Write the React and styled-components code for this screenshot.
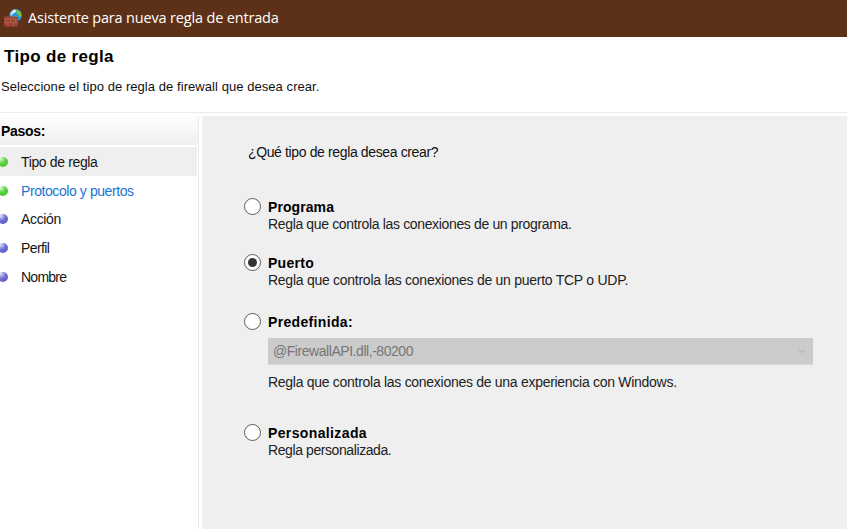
import React from 'react';
import styled, { createGlobalStyle } from 'styled-components';

const GlobalStyle = createGlobalStyle`
  * { box-sizing: border-box; }
  body { margin: 0; background: #fff; overflow: hidden; }
`;

const Window = styled.div`
  display: flex;
  flex-direction: column;
  width: 847px;
  height: 529px;
  overflow: hidden;
  color: #111;
  background: #fff;
  font: 14px/18px "Liberation Sans", Arial, sans-serif;
  white-space: nowrap;
`;

const TitleBar = styled.header`
  display: flex;
  align-items: center;
  gap: 6px;
  flex: none;
  height: 37px;
  padding: 0 0 2px 3px;
  background: #5d3118;
`;

const TitleText = styled.span`
  color: #fff;
  font: 14.5px/20px "Open Sans", "Noto Sans", sans-serif;
  letter-spacing: -0.17px;
`;

const PageHeader = styled.div`
  flex: none;
  height: 76px;
  padding-top: 10px;
  border-bottom: 1px solid #ececec;
`;

const PageTitle = styled.h1`
  margin: 0;
  padding-left: 4px;
  color: #000;
  font-size: 17px;
  line-height: 20px;
  letter-spacing: 0.33px;
`;

const PageHint = styled.p`
  margin: 11px 0 0;
  padding-left: 1px;
  font-size: 13px;
  letter-spacing: 0.06px;
`;

const Body = styled.div`
  display: flex;
  flex: 1;
  gap: 3px;
  padding-top: 3px;
`;

const Sidebar = styled.nav`
  width: 199px;
  border-right: 1px solid #ebebeb;
`;

const SidebarTitle = styled.h2`
  height: 29px;
  margin: 0 0 2px;
  padding: 6px 0 0 1px;
  color: #000;
  font-size: 14px;
  line-height: 18px;
  letter-spacing: -0.32px;
  background: linear-gradient(#fdfdfd, #f0f0f0);
`;

const Step = styled.div`
  display: flex;
  align-items: center;
  height: 28.8px;
  margin-right: 1px;
  color: ${(p) => (p.$link ? '#1a74d4' : '#151515')};
  background: ${(p) => (p.$active ? '#efefef' : 'transparent')};
  letter-spacing: ${(p) => p.$spacing}px;
  padding-top: ${(p) => (p.$active || p.$link ? 1 : 0)}px;
`;

const Bullet = styled.i`
  width: 10px;
  height: 10px;
  margin: 1px 13px 0 -2px;
  border-radius: 50%;
  background: ${(p) =>
    p.$done
      ? 'radial-gradient(circle at 30% 20%, #e4f9df 0, #8be078 25%, #52cd3b 50%, #4cc035 100%)'
      : 'radial-gradient(circle at 30% 20%, #e2e2fa 0, #9c9ce2 25%, #6868d0 50%, #6060c6 100%)'};
`;

const Panel = styled.main`
  flex: 1;
  padding: 27px 34px 0 44px;
  background: #efefef;
`;

const Question = styled.p`
  margin: 0 0 37px;
  padding-left: 2px;
  letter-spacing: -0.37px;
`;

const Option = styled.section`
  display: grid;
  grid-template-columns: 22px 1fr;
  margin-bottom: ${(p) => p.$gap}px;
`;

const Radio = styled.span`
  display: grid;
  place-items: center;
  width: 17px;
  height: 17px;
  margin-left: -2px;
  border: 1.5px solid #5c5c5c;
  border-radius: 50%;
  background: #fff;

  &::after {
    content: '';
    width: 9px;
    height: 9px;
    border-radius: 50%;
    background: ${(p) => (p.$checked ? '#333' : 'transparent')};
  }
`;

const OptionName = styled.strong`
  color: #000;
  letter-spacing: ${(p) => p.$spacing}px;
`;

const Description = styled.span`
  grid-column: 2;
  margin-top: -1px;
  color: #222;
  letter-spacing: ${(p) => p.$spacing}px;
`;

const Combo = styled.div`
  grid-column: 2;
  display: flex;
  align-items: center;
  justify-content: space-between;
  height: 27px;
  margin: 7px 0 9px;
  padding: 0 7px 0 5px;
  border-bottom: 1px solid #d7d7d7;
  color: #777;
  background: #cbcbcb;
  letter-spacing: -0.45px;
`;

function FirewallIcon() {
  return (
    <svg width="19" height="20" viewBox="0 0 19 20">
      <circle cx="12.7" cy="7.3" r="6.2" fill="#2f8fd8" />
      <path d="M7 5.5q2-4 5-4.3l1 2-2 2.2-2 1.3-1 2z" fill="#a9def2" />
      <path d="M13.5 1.5q4 1 5 5l-1 3-2-1.5-1.5-2-1-2z" fill="#6bc24c" />
      <path d="M10.5 8l3 .5 1.5 2.5-1 2.2-3-1z" fill="#57ad50" />
      <path d="M10 3l2-1 1 1.5-2 1.5z" fill="#eefafd" />
      <path d="M1 8.5h8l6 .8v9.2H1z" fill="#99402f" />
      <path d="M1 11.2h14M1 14.7h14M5 8.5v2.7M10 8.8v2.4M3 11.2v3.5M7.5 11.2v3.5M12.5 11.2v3.5M5 14.7v3.8M10 14.7v3.8" stroke="#b66f5e" strokeWidth=".7" />
    </svg>
  );
}

const steps = [
  { label: 'Tipo de regla', spacing: -0.36, done: true, active: true },
  { label: 'Protocolo y puertos', spacing: -0.42, done: true, link: true },
  { label: 'Acción', spacing: -0.34 },
  { label: 'Perfil', spacing: -0.6 },
  { label: 'Nombre', spacing: -0.75 },
];

const options = [
  { name: 'Programa', nameSpacing: 0.08, text: 'Regla que controla las conexiones de un programa.', spacing: -0.35, gap: 21 },
  { name: 'Puerto', nameSpacing: 0.27, text: 'Regla que controla las conexiones de un puerto TCP o UDP.', spacing: -0.265, gap: 24, checked: true },
  { name: 'Predefinida:', nameSpacing: 0.34, combo: '@FirewallAPI.dll,-80200', text: 'Regla que controla las conexiones de una experiencia con Windows.', spacing: -0.285, gap: 33 },
  { name: 'Personalizada', nameSpacing: 0.37, text: 'Regla personalizada.', spacing: -0.41, gap: 0 },
];

export default function App() {
  return (
    <Window>
      <GlobalStyle />
      <TitleBar>
        <FirewallIcon />
        <TitleText>Asistente para nueva regla de entrada</TitleText>
      </TitleBar>
      <PageHeader>
        <PageTitle>Tipo de regla</PageTitle>
        <PageHint>Seleccione el tipo de regla de firewall que desea crear.</PageHint>
      </PageHeader>
      <Body>
        <Sidebar>
          <SidebarTitle>Pasos:</SidebarTitle>
          {steps.map((s) => (
            <Step key={s.label} $link={s.link} $active={s.active} $spacing={s.spacing}>
              <Bullet $done={s.done} />
              {s.label}
            </Step>
          ))}
        </Sidebar>
        <Panel>
          <Question>¿Qué tipo de regla desea crear?</Question>
          {options.map((o) => (
            <Option key={o.name} $gap={o.gap}>
              <Radio $checked={o.checked} />
              <OptionName $spacing={o.nameSpacing}>{o.name}</OptionName>
              {o.combo && (
                <Combo>
                  {o.combo}
                  <svg width="8" height="5" viewBox="0 0 8 5">
                    <path d="M1 1l3 2.5L7 1" fill="none" stroke="#b8b8b8" strokeWidth="1.3" />
                  </svg>
                </Combo>
              )}
              <Description $spacing={o.spacing}>{o.text}</Description>
            </Option>
          ))}
        </Panel>
      </Body>
    </Window>
  );
}
